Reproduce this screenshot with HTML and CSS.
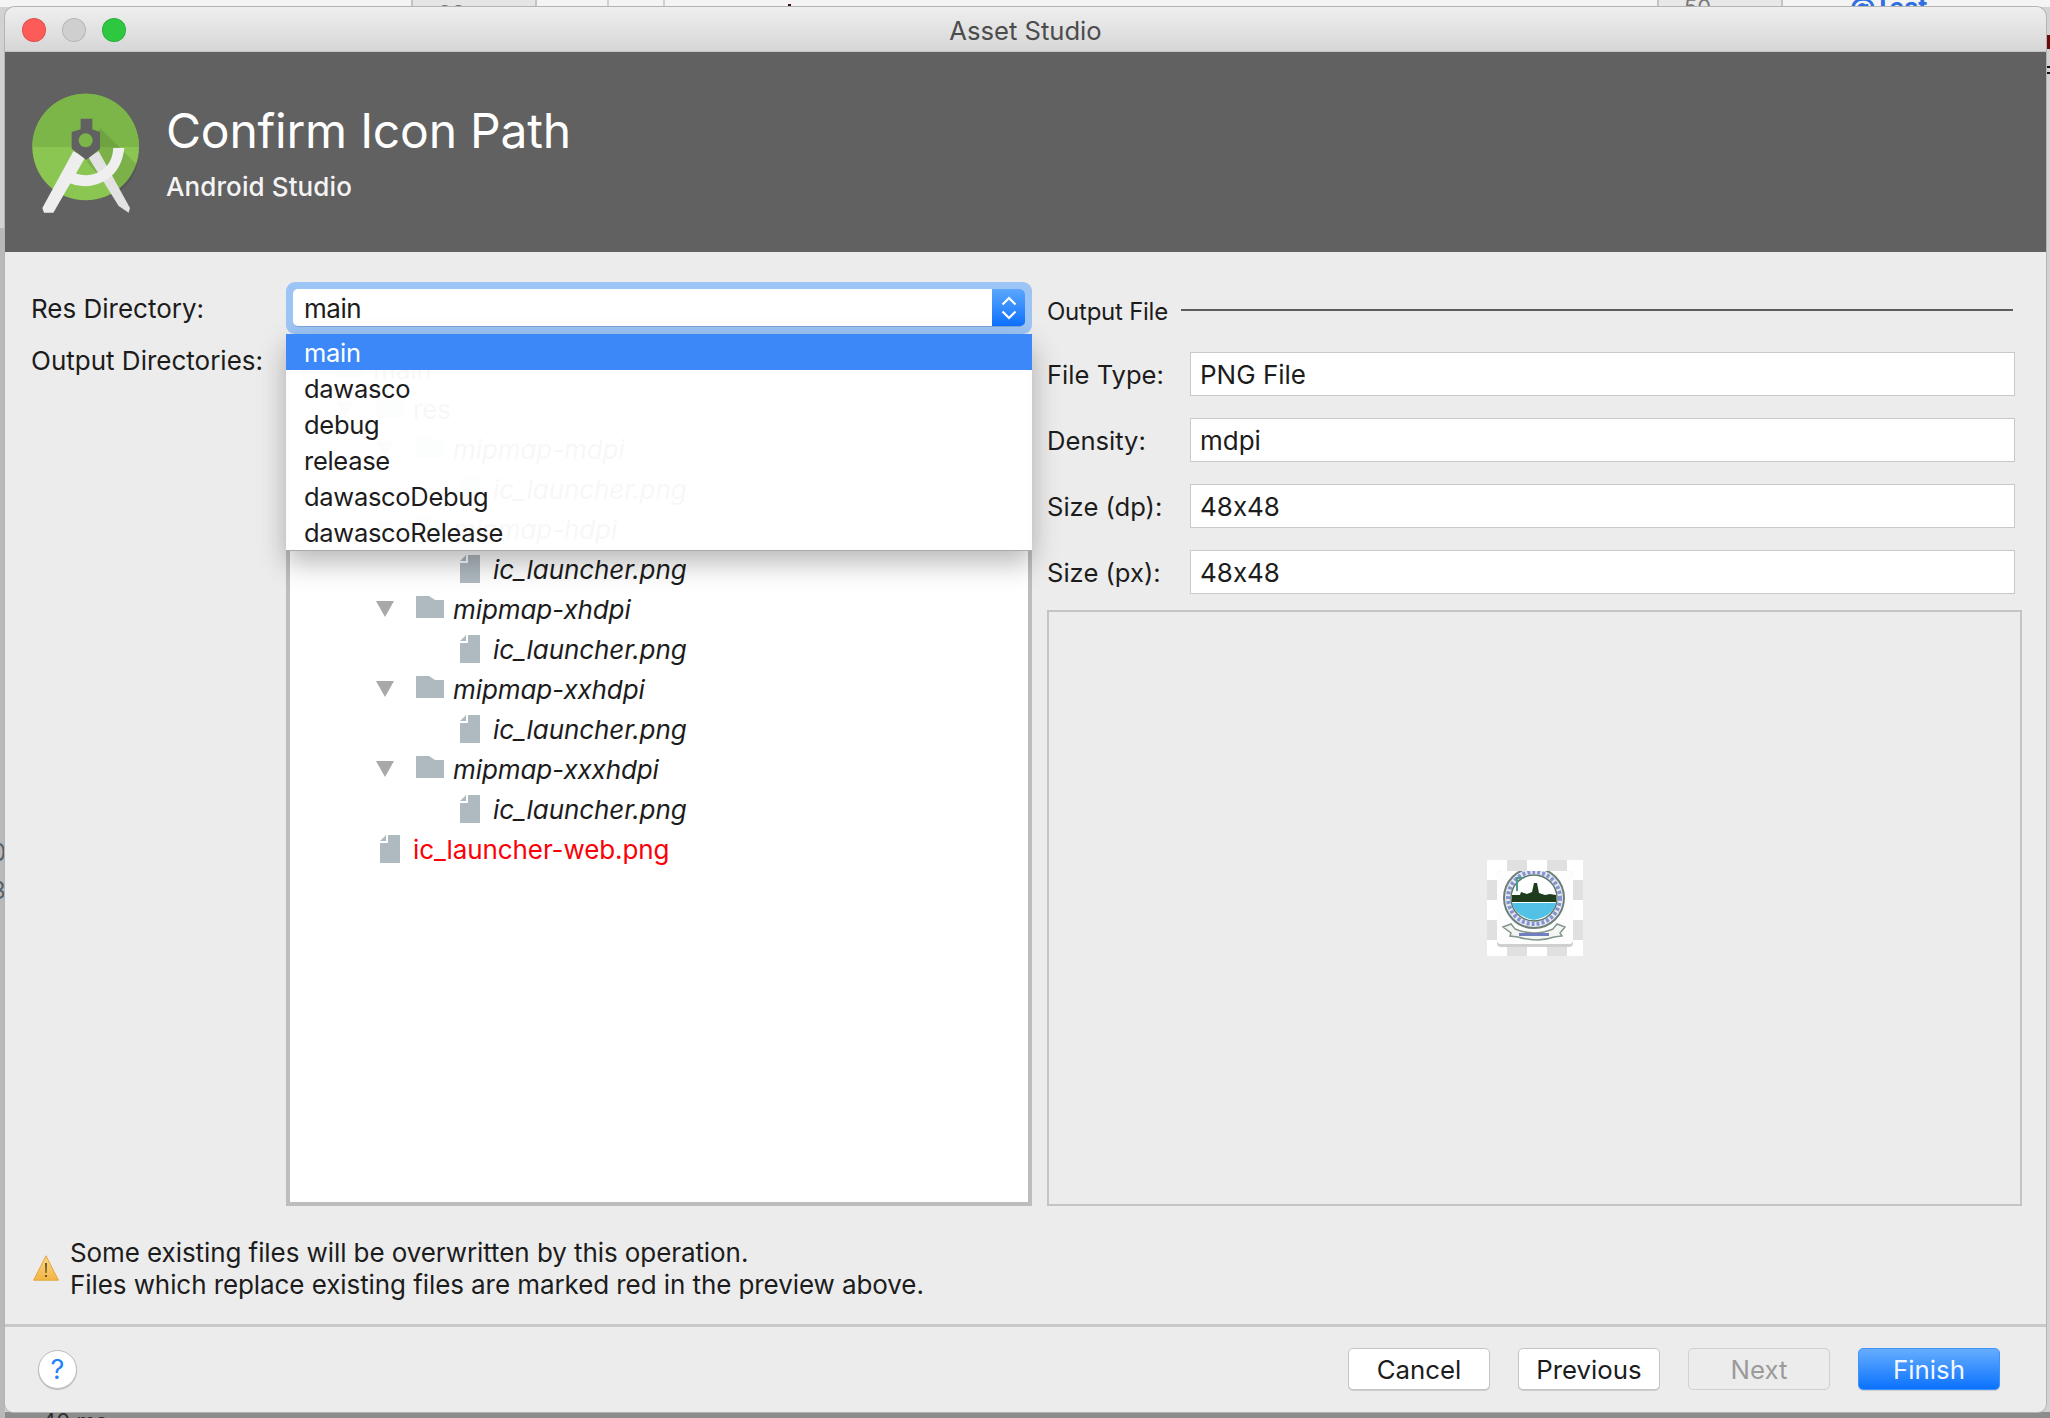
FILE: index.html
```html
<!DOCTYPE html>
<html lang="en">
<head>
<meta charset="utf-8">
<title>Asset Studio</title>
<link rel="stylesheet" href="styles.css">
</head>
<body>
<div class="desktop">
  <div class="behind">
    <span class="cell cell-a"><span class="peek peek-a">23</span></span><span class="cell cell-b"></span><span class="cell cell-c"></span>
    <span class="speck"></span>
    <span class="cell cell-d"><span class="peek">50</span></span>
    <span class="peek-test">@Test</span>
    <span class="edge-mark edge-a"></span><span class="edge-mark edge-b"></span><span class="edge-mark edge-c"></span>
    <span class="left-band"></span>
    <span class="left-digit digit-a">0</span><span class="left-digit digit-b">3</span>
    <span class="bottom-peek">40 ms</span>
  </div>

  <main class="window">
    <div class="titlebar">
      <div class="lights">
        <span class="light light-red"></span><span class="light light-grey"></span><span class="light light-green"></span>
      </div>
      <div class="window-title">Asset Studio</div>
    </div>

    <header class="banner">
      <svg class="logo" viewBox="0 0 420 420" aria-hidden="true">
        <circle cx="197" cy="195" r="160" fill="#8bc652"/>
        <path d="M37 195a160 160 0 0 1 320 0z" fill="#7cb548"/>
        <path d="M240 138 L352 250 Q335 310 285 335 L200 240z" fill="#000" opacity=".1"/>
        <path d="M67 378 L160 208 L196 226 L100 392 L72 392z" fill="#eeeeee"/>
        <path d="M330 378 L236 208 L205 226 L296 372 L326 392z" fill="#e2e2e2"/>
        <path d="M150 266 Q215 300 262 250 Q278 230 280 198 L313 198 Q306 262 262 292 Q205 330 134 298z" fill="#efefef"/>
        <path d="M182 110 H217 V142 L240 150 V200 L199 234 L155 200 V150 L182 142z" fill="#616161"/>
        <circle cx="197" cy="175" r="21" fill="#7cb548"/>
      </svg>
      <div class="banner-text">
        <h1 class="banner-title">Confirm Icon Path</h1>
        <div class="banner-sub">Android Studio</div>
      </div>
    </header>

    <section class="content">
      <div class="labels">
        <div class="label label-res">Res Directory:</div>
        <div class="label label-out">Output Directories:</div>
      </div>

      <div class="middle">
        <div class="combo">
          <div class="combo-field">
            <span class="combo-value">main</span>
            <span class="combo-btn">
              <svg class="chevrons" viewBox="0 0 18 26" aria-hidden="true"><path d="M2.500 9.500L9 3l6.500 6.500M2.500 16.500L9 23l6.500-6.500"/></svg>
            </span>
          </div>
        </div>

        <div class="tree">
          <div class="row folder-0"><svg class="arrow" viewBox="0 0 18 16"><path d="M0 0h18L9 16z"/></svg><svg class="folder" viewBox="0 0 28 22"><path d="M0 0h13l6 4h9v18H0z"/></svg><span>main</span></div>
          <div class="row folder-1"><svg class="arrow" viewBox="0 0 18 16"><path d="M0 0h18L9 16z"/></svg><svg class="folder" viewBox="0 0 28 22"><path d="M0 0h13l6 4h9v18H0z"/></svg><span>res</span></div>
          <div class="row folder-2 it"><svg class="arrow" viewBox="0 0 18 16"><path d="M0 0h18L9 16z"/></svg><svg class="folder" viewBox="0 0 28 22"><path d="M0 0h13l6 4h9v18H0z"/></svg><span>mipmap-mdpi</span></div>
          <div class="row file-3 it"><svg class="file" viewBox="0 0 20 28"><path d="M8 0h12v28H0V8h8zM0 6l6-6v6z"/></svg><span>ic_launcher.png</span></div>
          <div class="row folder-2 it"><svg class="arrow" viewBox="0 0 18 16"><path d="M0 0h18L9 16z"/></svg><svg class="folder" viewBox="0 0 28 22"><path d="M0 0h13l6 4h9v18H0z"/></svg><span>mipmap-hdpi</span></div>
          <div class="row file-3 it"><svg class="file" viewBox="0 0 20 28"><path d="M8 0h12v28H0V8h8zM0 6l6-6v6z"/></svg><span>ic_launcher.png</span></div>
          <div class="row folder-2 it"><svg class="arrow" viewBox="0 0 18 16"><path d="M0 0h18L9 16z"/></svg><svg class="folder" viewBox="0 0 28 22"><path d="M0 0h13l6 4h9v18H0z"/></svg><span>mipmap-xhdpi</span></div>
          <div class="row file-3 it"><svg class="file" viewBox="0 0 20 28"><path d="M8 0h12v28H0V8h8zM0 6l6-6v6z"/></svg><span>ic_launcher.png</span></div>
          <div class="row folder-2 it"><svg class="arrow" viewBox="0 0 18 16"><path d="M0 0h18L9 16z"/></svg><svg class="folder" viewBox="0 0 28 22"><path d="M0 0h13l6 4h9v18H0z"/></svg><span>mipmap-xxhdpi</span></div>
          <div class="row file-3 it"><svg class="file" viewBox="0 0 20 28"><path d="M8 0h12v28H0V8h8zM0 6l6-6v6z"/></svg><span>ic_launcher.png</span></div>
          <div class="row folder-2 it"><svg class="arrow" viewBox="0 0 18 16"><path d="M0 0h18L9 16z"/></svg><svg class="folder" viewBox="0 0 28 22"><path d="M0 0h13l6 4h9v18H0z"/></svg><span>mipmap-xxxhdpi</span></div>
          <div class="row file-3 it"><svg class="file" viewBox="0 0 20 28"><path d="M8 0h12v28H0V8h8zM0 6l6-6v6z"/></svg><span>ic_launcher.png</span></div>
          <div class="row file-1 red"><svg class="file" viewBox="0 0 20 28"><path d="M8 0h12v28H0V8h8zM0 6l6-6v6z"/></svg><span>ic_launcher-web.png</span></div>
        </div>

        <ul class="popup">
          <li class="opt opt-on">main</li>
          <li class="opt">dawasco</li>
          <li class="opt">debug</li>
          <li class="opt">release</li>
          <li class="opt">dawascoDebug</li>
          <li class="opt">dawascoRelease</li>
        </ul>
      </div>

      <div class="right">
        <div class="group-head"><span class="group-name">Output File</span><span class="group-line"></span></div>
        <div class="fields">
          <div class="field-row"><span class="field-label">File Type:</span><span class="field">PNG File</span></div>
          <div class="field-row"><span class="field-label">Density:</span><span class="field">mdpi</span></div>
          <div class="field-row"><span class="field-label">Size (dp):</span><span class="field">48x48</span></div>
          <div class="field-row"><span class="field-label">Size (px):</span><span class="field">48x48</span></div>
        </div>
        <div class="preview">
          <div class="checker">
            <svg class="app-icon" viewBox="0 0 76 76" aria-hidden="true">
              <rect x="0" y="0" width="76" height="76" rx="4" fill="#cfcfcf"/>
              <rect x="0" y="0" width="76" height="73" rx="4" fill="#fdfdfd"/>
              <circle cx="37" cy="27" r="30" fill="#e6e9f3" stroke="#6d7f76" stroke-width="2"/>
              <circle cx="37" cy="27" r="26" fill="none" stroke="#8494d2" stroke-width="4" stroke-dasharray="3 2"/>
              <circle cx="37" cy="27" r="23" fill="#fff" stroke="#5d7868" stroke-width="1.500"/>
              <path d="M15 24h8l1-3 6 2 5-2 2-9h3l2 10 6 2 5-1 6 1v7H15z" fill="#1f3d1c"/>
              <path d="M15 32h44q-3 13-22 17q-18-3-22-17z" fill="#51c1e6"/>
              <path d="M19 6h7v2h-5v12h-2z" fill="#4e9c8e"/>
              <path d="M6 56l8-3 4 5q19 8 38 0l4-5 8 3-5 6 2 3-8 1q-16 6-36 0l-8-1 1-3z" fill="#f4f6f4" stroke="#84968c" stroke-width="1.500"/>
              <rect x="22" y="62" width="30" height="3" fill="#6f7fc0"/>
            </svg>
          </div>
        </div>
      </div>
    </section>

    <section class="notice">
      <svg class="warn" viewBox="0 0 26 26" aria-hidden="true">
        <defs><linearGradient id="warnfill" x1="0" y1="0" x2="0" y2="1"><stop offset="0" stop-color="#fbd985"/><stop offset="1" stop-color="#f3b444"/></linearGradient></defs>
        <path d="M13 .8L25.400 25.200H.6z" fill="url(#warnfill)" stroke="#e3a63c" stroke-width="1"/>
        <path d="M12.200 8h1.600l-.3 10h-1zM12.200 20h1.600v2h-1.600z" fill="#4a3a1a"/>
      </svg>
      <div class="notice-text">
        <div>Some existing files will be overwritten by this operation.</div>
        <div>Files which replace existing files are marked red in the preview above.</div>
      </div>
    </section>

    <footer class="footer">
      <button class="help" type="button">?</button>
      <div class="actions">
        <button class="btn" type="button">Cancel</button>
        <button class="btn" type="button">Previous</button>
        <button class="btn btn-off" type="button">Next</button>
        <button class="btn btn-main" type="button">Finish</button>
      </div>
    </footer>
  </main>
</div>
</body>
</html>
```

FILE: styles.css
```css
* { box-sizing: border-box; }
html, body { margin: 0; padding: 0; }
body {
  width: 2050px;
  height: 1418px;
  overflow: hidden;
  font-family: "Inter", "Liberation Sans", sans-serif;
  font-feature-settings: "calt" 0;
  color: #1c1c1c;
}

/* desktop behind the dialog */
.desktop {
  position: relative;
  width: 2050px;
  height: 1418px;
  padding: 7px 0 0 5px;
  overflow: hidden;
  background: linear-gradient(#f4f4f4 0, #f4f4f4 7px, #d2d2d2 7px, #d2d2d2 1412px, #8c8c8c 1412px);
}
.behind { position: absolute; inset: 0; overflow: hidden; }
.cell { position: absolute; top: 0; height: 8px; border-right: 2px solid #cfcfcf; overflow: hidden; }
.cell-a { left: 411px; width: 126px; background: #e5e5e5; border-left: 2px solid #c4c4c4; border-right-color: #c4c4c4; }
.cell-b { left: 537px; width: 72px; }
.cell-c { left: 609px; width: 56px; }
.cell-d { left: 1657px; width: 126px; background: #e8e8e8; border-left: 2px solid #c4c4c4; border-right-color: #c4c4c4; }
.peek { position: absolute; left: 25px; top: -6px; font-size: 22px; color: #777; }
.peek-a { top: 0; }
.speck { position: absolute; left: 788px; top: 4px; width: 3px; height: 3px; background: #3a1010; }
.peek-test { position: absolute; left: 1850px; top: -8px; font-size: 25px; font-weight: 700; color: #2f6fe0; }
.edge-mark { position: absolute; left: 2047px; width: 3px; background: #111; }
.edge-a { top: 35px; height: 14px; background: #6a0a0a; }
.edge-b { top: 66px; height: 2px; }
.edge-c { top: 72px; height: 2px; }
.left-band { position: absolute; left: 0; top: 228px; width: 5px; height: 1190px; background: #b9b9b9; }
.left-digit { position: absolute; left: -9px; font-size: 24px; color: #55606e; }
.digit-a { top: 838px; }
.digit-b { top: 876px; }
.bottom-peek { position: absolute; left: 42px; top: 1408px; font-size: 22px; color: #2e2e2e; }

/* window */
.window {
  position: relative;
  width: 2041px;
  height: 1405px;
  display: flex;
  flex-direction: column;
  background: #ececec;
  border-radius: 10px 10px 8px 8px;
  overflow: hidden;
  box-shadow: 0 0 0 1px #b4b4b4;
}
.titlebar {
  position: relative;
  flex: 0 0 45px;
  display: flex;
  align-items: center;
  justify-content: center;
  padding-top: 2px;
  background: linear-gradient(#efefef, #d6d6d6);
  border-bottom: 1px solid #c4c4c4;
}
.lights { position: absolute; left: 17px; top: 11px; display: flex; gap: 16px; }
.light { width: 24px; height: 24px; border-radius: 50%; border: 1px solid rgba(0,0,0,.12); }
.light-red { background: #fc5b57; }
.light-grey { background: #cfcfcf; }
.light-green { background: #2dc840; }
.window-title { font-size: 25.600px; color: #4c4c4c; }

.banner {
  flex: 0 0 200px;
  display: flex;
  align-items: center;
  padding-left: 15px;
  background: #616161;
  color: #fff;
}
.logo { width: 140px; height: 140px; flex: none; }
.banner-text { margin-left: 6px; display: flex; flex-direction: column; }
.banner-title { margin: 1px 0 0; font-size: 48px; line-height: 56px; font-weight: 400; letter-spacing: -.22px; }
.banner-sub { margin-top: 12px; font-size: 26px; line-height: 32px; font-weight: 500; letter-spacing: .1px; color: #f4f4f4; }

/* main content */
.content {
  flex: 0 0 954px;
  display: grid;
  grid-template-columns: 255px 746px 990px;
  align-items: start;
  padding: 30px 0 0 26px;
}
.labels { display: flex; flex-direction: column; }
.label { font-size: 26px; white-space: nowrap; }
.label-res { height: 54px; line-height: 54px; }
.label-out { height: 40px; line-height: 40px; margin-top: 5px; }

.middle { position: relative; height: 924px; display: flex; flex-direction: column; }
.combo { flex: 0 0 51px; padding: 7px; background: #9cc4f4; border-radius: 9px; }
.combo-field {
  height: 38px;
  display: flex;
  align-items: center;
  background: #fff;
  border-radius: 5px;
  border-bottom: 1px solid #7ca4da;
  overflow: hidden;
}
.combo-value { flex: 1; padding: 2px 0 0 11px; font-size: 26px; letter-spacing: -.5px; }
.combo-btn {
  flex: 0 0 33px;
  height: 38px;
  display: flex;
  align-items: center;
  justify-content: center;
  background: linear-gradient(#5ca7fe, #0b6ffd);
}
.chevrons { width: 18px; height: 26px; fill: none; stroke: #fff; stroke-width: 2.200; }

.tree {
  flex: none;
  height: 866px;
  margin-top: 6px;
  padding-top: 5px;
  background: #fff;
  border: 4px solid #bdbdbd;
}
.row { height: 40px; display: flex; align-items: center; font-size: 26px; letter-spacing: -.1px; white-space: nowrap; color: #1c1c1c; }
.it { font-style: italic; }
.folder-0 { padding-left: 6px; }
.folder-1 { padding-left: 46px; }
.folder-2 { padding-left: 86px; }
.file-3 { padding-left: 170px; }
.file-1 { padding-left: 90px; }
.red { color: #fb0007; }
.arrow { width: 18px; height: 16px; margin-right: 22px; fill: #a9a9a9; flex: none; }
.folder { width: 28px; height: 22px; margin-right: 9px; margin-top: -4px; fill: #afb9c0; flex: none; }
.file { width: 20px; height: 28px; margin-right: 13px; fill: #afb9c0; flex: none; }

.popup {
  position: absolute;
  left: 0;
  top: 52px;
  width: 746px;
  margin: 0;
  padding: 0;
  list-style: none;
  background: rgba(255, 255, 255, .965);
  border-bottom: 1px solid #a9a9a9;
  box-shadow: 0 12px 26px rgba(0, 0, 0, .28);
}
.opt { height: 36px; line-height: 38px; padding-left: 18px; font-size: 25.500px; letter-spacing: -.3px; }
.opt-on { background: #3d88f8; color: #fff; }

.right { display: flex; flex-direction: column; margin-left: 15px; }
.group-head { height: 58px; display: flex; align-items: center; margin-bottom: 12px; }
.group-name { font-size: 24px; letter-spacing: -.25px; white-space: nowrap; }
.group-line { width: 832px; height: 2px; margin: -2px 9px 0 auto; background: #5c5c5c; }
.fields { display: flex; flex-direction: column; gap: 22px; }
.field-row { height: 44px; display: flex; align-items: center; }
.field-label { flex: 0 0 143px; font-size: 25.600px; white-space: nowrap; }
.field {
  width: 825px;
  height: 44px;
  line-height: 43px;
  padding-left: 9px;
  background: #fff;
  border: 1px solid #c9c9c9;
  font-size: 26px;
}
.preview {
  height: 596px;
  margin-top: 16px;
  display: flex;
  align-items: center;
  justify-content: center;
  background: #ececec;
  border: 2px solid #c4c4c4;
}
.checker {
  position: relative;
  width: 96px;
  height: 96px;
  background: repeating-conic-gradient(#e0e0e0 0 25%, #ffffff 0 50%) 0 0 / 40px 40px;
}
.app-icon { position: absolute; left: 10px; top: 11px; width: 76px; height: 76px; }

/* notice + footer */
.notice {
  flex: 0 0 118px;
  display: flex;
  align-items: flex-start;
  padding: 31px 0 0 28px;
}
.warn { width: 26px; height: 26px; flex: none; margin-top: 18px; }
.notice-text { margin-left: 11px; font-size: 26px; line-height: 32px; letter-spacing: -.08px; }

.footer {
  flex: 1;
  display: flex;
  align-items: flex-start;
  justify-content: space-between;
  padding: 21px 46px 0 33px;
  border-top: 3px solid #c8c8c8;
}
.help {
  width: 39px;
  height: 39px;
  padding: 0;
  margin-top: 2px;
  border: 1px solid #bdbdbd;
  border-radius: 50%;
  background: #fff;
  color: #1a84ff;
  font: 400 27px "Inter", sans-serif;
  box-shadow: 0 1px 1px rgba(0,0,0,.2);
}
.actions { display: flex; gap: 28px; }
.btn {
  width: 142px;
  height: 42px;
  padding: 0;
  border: 1px solid #c4c4c4;
  border-radius: 5px;
  background: #fff;
  color: #1c1c1c;
  font: 400 25.800px "Inter", sans-serif;
  box-shadow: 0 1px 0 rgba(0,0,0,.12);
}
.btn-off { background: #ececec; color: #9b9b9b; border-color: #d0d0d0; box-shadow: none; }
.btn-main { background: linear-gradient(#66adff, #0a72fe); border-color: #3f93fb; color: #f3f8ff; }
```
